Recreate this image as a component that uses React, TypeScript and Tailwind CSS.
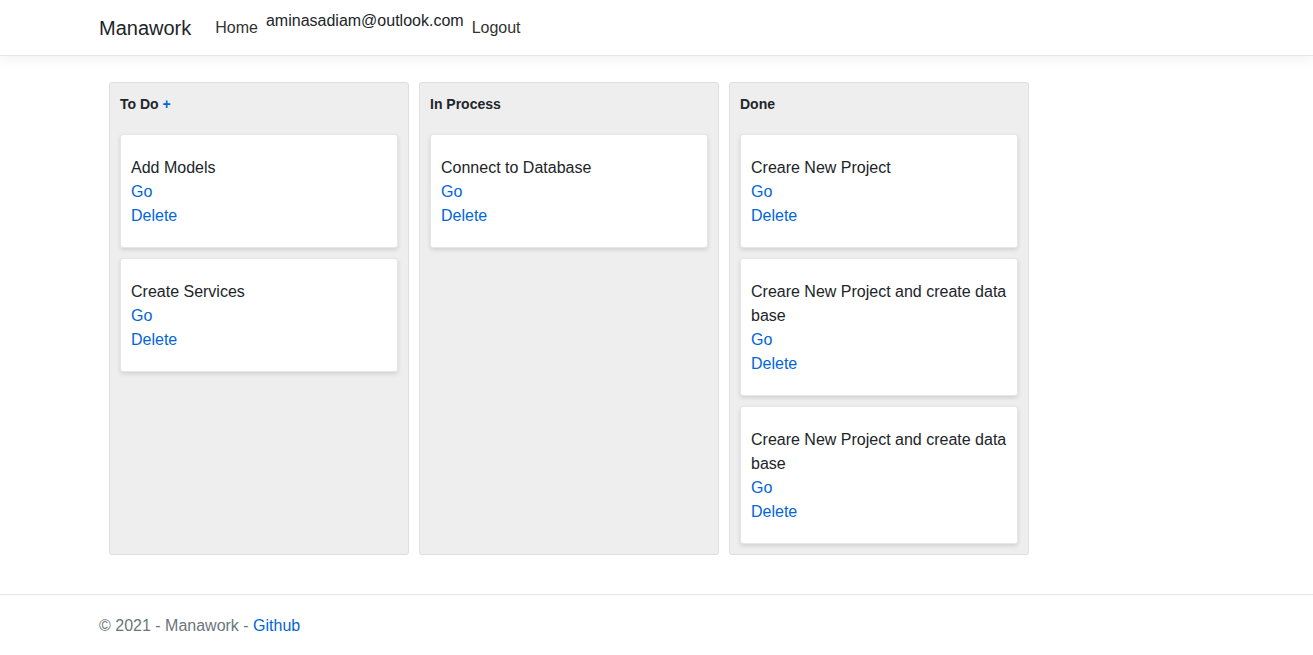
type Task = { title: string };

const columns: { name: string; add?: boolean; tasks: Task[] }[] = [
  {
    name: "To Do",
    add: true,
    tasks: [{ title: "Add Models" }, { title: "Create Services" }],
  },
  {
    name: "In Process",
    tasks: [{ title: "Connect to Database" }],
  },
  {
    name: "Done",
    tasks: [
      { title: "Creare New Project" },
      { title: "Creare New Project and create data base" },
      { title: "Creare New Project and create data base" },
    ],
  },
];

export default function App() {
  return (
    <div
      className="flex min-h-[655px] flex-col bg-white text-[#212529]"
      style={{ fontFamily: '"Liberation Sans", Arial, sans-serif' }}
    >
      <header className="h-[56px] border-b border-[#e5e5e5] bg-white shadow-[0_4px_12px_rgba(0,0,0,0.05)]">
        <div className="mx-auto flex h-[55px] w-[1140px] items-start px-[12.5px]">
          <a className="mr-4 mt-[13px] text-[20px] leading-[30px] text-[#212529]">
            Manawork
          </a>
          <a className="mt-[16px] px-2 text-base leading-6 text-[#333]">Home</a>
          <span className="mt-[9px] text-base leading-6 text-[#212529]">
            aminasadiam@outlook.com
          </span>
          <a className="mt-[16px] px-2 text-base leading-6 text-[#333]">Logout</a>
        </div>
      </header>

      <main className="mx-auto w-[1140px] pl-[22.5px] pt-[26px]">
        <div className="flex gap-[10px]">
          {columns.map((col) => (
            <div
              key={col.name}
              className="min-h-[472px] w-[300px] rounded-[3px] border border-[#dedede] bg-[#eeeeee] px-[10px] pb-[10px] pt-[11px]"
            >
              <h4 className="mb-[19px] text-[14px] font-bold leading-[21px]">
                {col.name}
                {col.add && (
                  <>
                    {" "}
                    <a className="text-[#0366d6]">+</a>
                  </>
                )}
              </h4>
              <div className="flex flex-col gap-[10px]">
                {col.tasks.map((t, i) => (
                  <div
                    key={i}
                    className="rounded-[3px] border border-[#e6e6e6] bg-white px-[10px] pb-[19px] pt-[21px] text-base leading-6 shadow-[0_2px_4px_rgba(0,0,0,0.12)]"
                  >
                    <div>{t.title}</div>
                    <a className="block text-[#0366d6]">Go</a>
                    <a className="block text-[#0366d6]">Delete</a>
                  </div>
                ))}
              </div>
            </div>
          ))}
        </div>
      </main>

      <footer className="mt-auto border-t border-[#e5e5e5] text-[#6c757d]">
        <div className="mx-auto w-[1140px] px-[12.5px] pt-px text-base leading-[59px]">
          © 2021 - Manawork - <a className="text-[#0366d6]">Github</a>
        </div>
      </footer>
    </div>
  );
}
